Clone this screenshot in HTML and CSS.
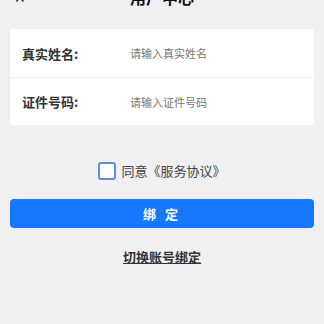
FILE: index.html
```html
<!DOCTYPE html>
<html lang="zh-CN">
<head>
  <meta charset="UTF-8" />
  <meta name="viewport" content="width=device-width, initial-scale=1.0"/>
  <title>用户中心</title>
  <link rel="stylesheet" href="styles.css">
</head>
<body>
  <div class="header">
    <span class="close">✕</span>
    <h1>用户中心</h1>
  </div>

  <div class="form-card">
    <div class="row">
      <label>真实姓名:</label>
      <span class="placeholder">请输入真实姓名</span>
    </div>
    <div class="row">
      <label>证件号码:</label>
      <span class="placeholder">请输入证件号码</span>
    </div>
  </div>

  <div class="agree">
    <span class="checkbox"></span>
    <span>同意《服务协议》</span>
  </div>

  <button class="bind-btn">绑 定</button>

  <div class="switch">
    <a href="#">切换账号绑定</a>
  </div>
</body>
</html>
```

FILE: styles.css
```css
* {
  box-sizing: border-box;
  margin: 0;
  padding: 0;
}

body {
  font-family: "Noto Sans CJK SC", "Noto Sans", sans-serif;
  background: #f0f0f2;
  color: #222;
  width: 324px;
  height: 324px;
  overflow: hidden;
  padding: 0 10px;
}

.header {
  position: relative;
  height: 44px;
  margin-top: -16px;
  text-align: center;
}

.header h1 {
  font-size: 16px;
  font-weight: bold;
  line-height: 26px;
  color: #111;
}

.close {
  position: absolute;
  left: 4px;
  top: 0;
  font-size: 14px;
  line-height: 26px;
  color: #222;
}

.form-card {
  background: #fff;
  border-radius: 4px;
  margin-top: 1px;
}

.row {
  display: flex;
  align-items: center;
  height: 48px;
  padding: 0 12px;
}

.row + .row {
  border-top: 1px solid #eeeef0;
}

.row label {
  width: 108px;
  font-size: 13px;
  font-weight: bold;
  color: #333;
}

.placeholder {
  font-size: 11px;
  color: #777;
}

.agree {
  display: flex;
  align-items: center;
  justify-content: center;
  gap: 5px;
  margin-top: 36px;
  font-size: 13px;
  color: #444;
}

.checkbox {
  width: 18px;
  height: 18px;
  border: 2px solid #5b8fd6;
  border-radius: 3px;
  background: #fff;
}

.bind-btn {
  display: block;
  width: 100%;
  height: 29px;
  margin-top: 19px;
  border: none;
  border-radius: 4px;
  background: #1677ff;
  color: #fff;
  font-family: inherit;
  font-size: 13px;
  font-weight: bold;
  letter-spacing: 3px;
}

.switch {
  text-align: center;
  margin-top: 15px;
}

.switch a {
  font-size: 13px;
  font-weight: bold;
  color: #333;
  text-decoration: underline;
}
```
